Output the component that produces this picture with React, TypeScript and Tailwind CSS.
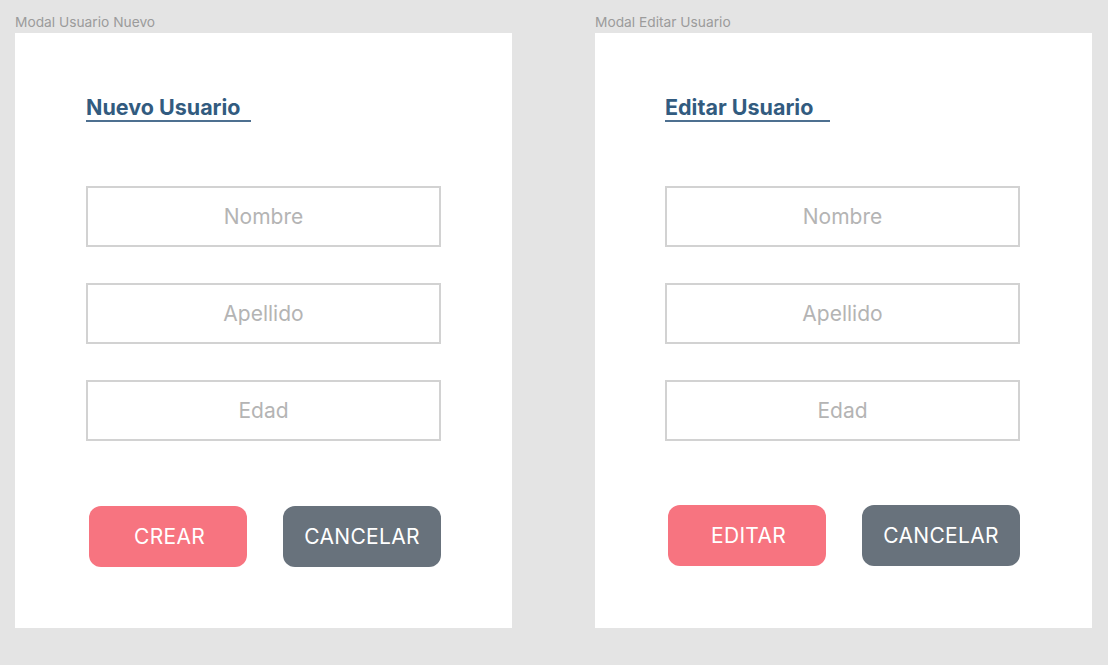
const fields = ['Nombre', 'Apellido', 'Edad'];

function Modal({ label, title, action, shift }: { label: string; title: string; action: string; shift?: boolean }) {
  return (
    <div className="flex flex-col">
      <div className="h-[33px] pt-[13px] text-[13.75px] leading-[18px] text-[#9b9b9b]">{label}</div>
      <div className={`w-[497px] h-[595px] bg-white pt-[59px] ${shift ? 'pl-[70px]' : 'pl-[71px]'}`}>
        <div className="w-[165px] h-[30px] pt-[3px] border-b-2 border-[#4e7090] text-[21.5px] leading-[24px] font-bold text-[#325b7f]">
          {title}
        </div>
        <div className="mt-[64px] flex flex-col gap-[36px]">
          {fields.map((f) => (
            <div
              key={f}
              className="w-[355px] h-[61px] border-2 border-[#d2d2d2] flex items-center justify-center text-[21px] text-[#b4b4b4]"
            >
              {f}
            </div>
          ))}
        </div>
        <div className={`flex items-center ${shift ? 'mt-[64px]' : 'mt-[65px]'}`}>
          <button className="ml-[3px] w-[158px] h-[61px] pl-[3px] rounded-[12px] bg-[#f77480] text-white text-[21px] tracking-[0.3px]">
            {action}
          </button>
          <button className="ml-[36px] w-[158px] h-[61px] rounded-[12px] bg-[#68727c] text-white text-[21px] tracking-[0.3px]">
            CANCELAR
          </button>
        </div>
      </div>
    </div>
  );
}

export default function App() {
  return (
    <div className="w-[1108px] h-[665px] bg-[#e4e4e4] flex gap-[83px] pl-[15px] font-['Inter',sans-serif]">
      <Modal label="Modal Usuario Nuevo" title="Nuevo Usuario" action="CREAR" />
      <Modal label="Modal Editar Usuario" title="Editar Usuario" action="EDITAR" shift />
    </div>
  );
}
